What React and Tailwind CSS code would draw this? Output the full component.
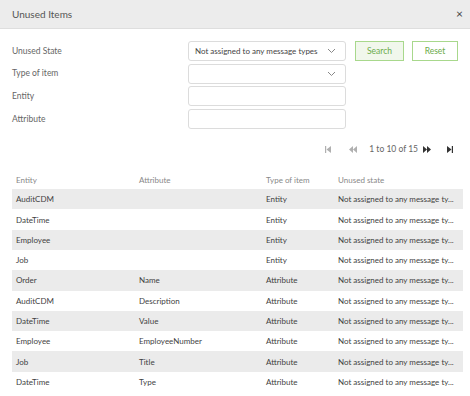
import React from "react";

const rows = [
  ["AuditCDM", "", "Entity"],
  ["DateTime", "", "Entity"],
  ["Employee", "", "Entity"],
  ["Job", "", "Entity"],
  ["Order", "Name", "Attribute"],
  ["AuditCDM", "Description", "Attribute"],
  ["DateTime", "Value", "Attribute"],
  ["Employee", "EmployeeNumber", "Attribute"],
  ["Job", "Title", "Attribute"],
  ["DateTime", "Type", "Attribute"],
];

const Chevron = () => (
  <svg width="9" height="6" viewBox="0 0 9 6" className="text-[#888]">
    <path d="M1 1l3.5 3.5L8 1" fill="none" stroke="currentColor" strokeWidth="1" />
  </svg>
);

const App = () => {
  return (
    <div
      className="w-[470px] h-[396px] overflow-hidden bg-white text-[#555]"
      style={{ fontFamily: "Lato, 'Open Sans', sans-serif" }}
    >
      {/* Header */}
      <div className="h-[29px] bg-[#ececec] border-b border-[#dedede] flex items-center justify-between pl-3 pr-[7px]">
        <span className="text-[10px] text-[#555]">Unused Items</span>
        <span className="text-[12px] leading-none text-[#444]">×</span>
      </div>

      {/* Filters */}
      <div className="pt-3 px-3 flex text-[8.5px]">
        <div className="flex flex-col gap-[2.7px]">
          {[
            ["Unused State", "Not assigned to any message types", true],
            ["Type of item", "", true],
            ["Entity", "", false],
            ["Attribute", "", false],
          ].map(([label, value, select]) => (
            <div key={label} className="flex items-center h-[20px]">
              <span className="w-[176px] text-[#666]">{label}</span>
              <div className="w-[158px] h-[20px] border border-[#dcdcdc] rounded-[3px] flex items-center justify-between pl-[6px] pr-[9px] text-[#444] text-[8px] whitespace-nowrap">
                <span>{value}</span>
                {select && <Chevron />}
              </div>
            </div>
          ))}
        </div>
        <div className="flex gap-[8px] ml-[9px] h-[20px]">
          <button className="w-[49px] h-[20px] border border-[#a8d88c] bg-[#f1f7ec] text-[#6bab4a] text-[8.5px]">
            Search
          </button>
          <button className="w-[46px] h-[20px] border border-[#a8d88c] bg-white text-[#6bab4a] text-[8.5px]">
            Reset
          </button>
        </div>
      </div>

      {/* Pagination */}
      <div className="flex items-center justify-end mt-[14px] pr-[17px] h-[12px] text-[8.5px] text-[#666]">
        <svg width="6" height="7" viewBox="0 0 6 7" className="text-[#b0b0b0]">
          <rect x="0" y="0" width="1.2" height="7" fill="currentColor" />
          <path d="M6 0v7L1.5 3.5z" fill="currentColor" />
        </svg>
        <svg width="8" height="7" viewBox="0 0 8 7" className="text-[#b0b0b0] ml-[18px]">
          <path d="M4 0v7L0 3.5zM8 0v7L4 3.5z" fill="currentColor" />
        </svg>
        <span className="ml-[12px]">1 to 10 of 15</span>
        <svg width="8" height="7" viewBox="0 0 8 7" className="text-[#333] ml-[5px]">
          <path d="M0 0v7l4-3.5zM4 0v7l4-3.5z" fill="currentColor" />
        </svg>
        <svg width="6" height="7" viewBox="0 0 6 7" className="text-[#333] ml-[16px]">
          <path d="M0 0v7l4.5-3.5z" fill="currentColor" />
          <rect x="4.8" y="0" width="1.2" height="7" fill="currentColor" />
        </svg>
      </div>

      {/* Table */}
      <div className="mx-3 mt-[16px] w-[451px] text-[8px]">
        <div className="grid grid-cols-[123px_127px_72px_129px] h-[18px] items-center text-[#888]">
          <span className="pl-1">Entity</span>
          <span className="pl-1">Attribute</span>
          <span className="pl-1">Type of item</span>
          <span className="pl-1">Unused state</span>
        </div>
        {rows.map(([entity, attr, type], i) => (
          <div
            key={i}
            className={`grid grid-cols-[123px_127px_72px_129px] h-[20.3px] items-center text-[#3f3f3f] ${
              i % 2 === 0 ? "bg-[#ebebeb]" : "bg-white"
            }`}
          >
            <span className="pl-1">{entity}</span>
            <span className="pl-1">{attr}</span>
            <span className="pl-1">{type}</span>
            <span className="pl-1 whitespace-nowrap">Not assigned to any message ty...</span>
          </div>
        ))}
      </div>
    </div>
  );
};

export default App;
